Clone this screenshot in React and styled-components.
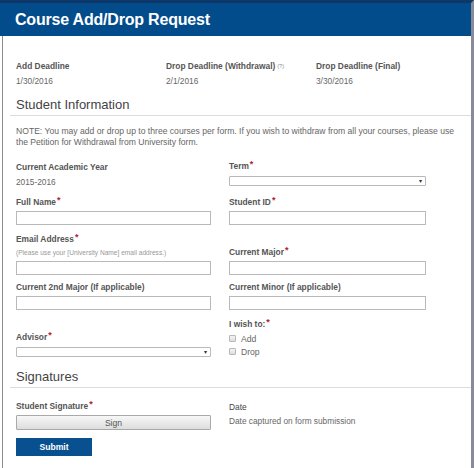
import React from "react";
import styled, { createGlobalStyle } from "styled-components";

const Global = createGlobalStyle`
  html, body { margin: 0; padding: 0; background: #ffffff; }
  body { font-family: "Liberation Sans", Arial, sans-serif; }
  * { box-sizing: border-box; }
`;

const Frame = styled.div`
  width: 474px;
  height: 468px;
  border-top: 3px solid #0c3768;
  border-right: 3px solid #8a8b98;
  display: flex;
  flex-direction: column;
  overflow: hidden;
`;

const Header = styled.header`
  height: 33px;
  flex: none;
  background: #034c8b;
  display: flex;
  align-items: center;
  padding-left: 15px;
`;

const Title = styled.h1`
  margin: 0;
  color: #ffffff;
  font-family: "Liberation Sans", Arial, sans-serif;
  font-weight: 700;
  font-size: 16px;
  letter-spacing: -0.2px;
`;

const Body = styled.main`
  flex: 1;
  margin-left: 2px;
  border-left: 1px solid #8c8c8c;
  padding: 24px 5px 0 13px;
  color: #555;
`;

const DeadlineRow = styled.div`
  display: grid;
  grid-template-columns: 150px 150px 150px;
`;

const Stack = styled.div`
  display: flex;
  flex-direction: column;
  gap: ${(p) => p.$gap ?? 3}px;
  align-self: ${(p) => (p.$top ? "start" : "auto")};
  margin-top: ${(p) => p.$top ?? 0}px;
`;

const Label = styled.div`
  font-size: 8.4px;
  line-height: 12px;
  font-weight: ${(p) => (p.$plain ? 400 : 700)};
  color: ${(p) => (p.$plain ? "#444" : "#555")};
  white-space: nowrap;
`;

const Value = styled.div`
  font-size: 8.3px;
  line-height: 12px;
  color: #666;
`;

const Help = styled.span`
  font-size: 5.5px;
  line-height: 0;
  font-weight: 400;
  color: #888;
  margin-left: 2px;
  vertical-align: 1px;
`;

const Req = styled.span`
  color: #b3202a;
  font-size: 9px;
  line-height: 0;
  margin-left: 1px;
  vertical-align: 2px;
`;

const SectionTitle = styled.h2`
  margin: ${(p) => p.$top}px -6px 0;
  padding-left: 6px;
  font-weight: 400;
  font-size: 13px;
  line-height: 18px;
  color: #444;
  border-bottom: 1px solid #dcdcdc;
  padding-bottom: 1px;
`;

const Note = styled.p`
  margin: 10px 0 0;
  font-size: 8.6px;
  line-height: 11px;
  color: #666;
  width: 448px;
`;

const FormGrid = styled.div`
  display: grid;
  grid-template-columns: 195px 197px;
  column-gap: 18px;
  margin-top: ${(p) => p.$top}px;
  align-items: end;
`;

const Field = styled.div`
  display: flex;
  flex-direction: column;
`;

const Hint = styled.div`
  font-size: 6.6px;
  line-height: 8px;
  color: #999;
  margin-top: 4px;
  white-space: nowrap;
`;

const TextInput = styled.div`
  height: 14px;
  margin-top: ${(p) => p.$top ?? 3}px;
  border: 1px solid #b9b9b9;
  background: #fff;
`;

const Select = styled.div`
  height: 10px;
  margin-top: ${(p) => p.$top ?? 4}px;
  border: 1px solid #b9b9b9;
  border-radius: 1px;
  background: #fff;
  display: flex;
  align-items: center;
  justify-content: flex-end;
  padding-right: 3px;
  font-size: 6px;
  line-height: 8px;
  color: #333;
`;

const Checks = styled.div`
  display: flex;
  flex-direction: column;
  margin-top: 2px;
`;

const CheckRow = styled.label`
  display: flex;
  align-items: center;
  gap: 5px;
  height: 13px;
  font-size: 8.6px;
  color: #666;
`;

const Box = styled.span`
  width: 7px;
  height: 7px;
  border: 1px solid #b8b8b8;
  background: linear-gradient(#f4f4f4, #dedede);
  border-radius: 1px;
`;

const SignButton = styled.button`
  height: 15px;
  margin-top: 3px;
  border: 1px solid #a9a9a9;
  border-radius: 1px;
  background: linear-gradient(#f7f7f7, #dddddd);
  color: #555;
  font-family: "Liberation Sans", Arial, sans-serif;
  font-size: 8.6px;
  padding: 0;
`;

const Submit = styled.button`
  margin-top: 8px;
  width: 76px;
  height: 18px;
  border: none;
  background: #08508f;
  color: #fff;
  font-family: "Liberation Sans", Arial, sans-serif;
  font-weight: 700;
  font-size: 8.6px;
  padding: 0;
  display: block;
`;

const Spacer = styled.div`
  height: ${(p) => p.$h}px;
`;

export default function App() {
  return (
    <>
      <Global />
      <Frame>
        <Header>
          <Title>Course Add/Drop Request</Title>
        </Header>
        <Body>
          <DeadlineRow>
            <Stack>
              <Label>Add Deadline</Label>
              <Value>1/30/2016</Value>
            </Stack>
            <Stack>
              <Label>
                Drop Deadline (Withdrawal)<Help>(?)</Help>
              </Label>
              <Value>2/1/2016</Value>
            </Stack>
            <Stack>
              <Label>Drop Deadline (Final)</Label>
              <Value>3/30/2016</Value>
            </Stack>
          </DeadlineRow>

          <SectionTitle $top={9}>Student Information</SectionTitle>
          <Note>
            NOTE: You may add or drop up to three courses per form. If you wish to withdraw
            from all your courses, please use the Petition for Withdrawal from University form.
          </Note>

          <FormGrid $top={12}>
            <Stack>
              <Label>Current Academic Year</Label>
              <Value>2015-2016</Value>
            </Stack>
            <Field>
              <Label>
                Term<Req>*</Req>
              </Label>
              <Select $top={4}>▾</Select>
              <Spacer $h={2} />
            </Field>
          </FormGrid>

          <FormGrid $top={8}>
            <Field>
              <Label>
                Full Name<Req>*</Req>
              </Label>
              <TextInput />
            </Field>
            <Field>
              <Label>
                Student ID<Req>*</Req>
              </Label>
              <TextInput />
            </Field>
          </FormGrid>

          <FormGrid $top={8}>
            <Field>
              <Label>
                Email Address<Req>*</Req>
              </Label>
              <Hint>(Please use your [University Name] email address.)</Hint>
              <TextInput $top={4} />
            </Field>
            <Field>
              <Label>
                Current Major<Req>*</Req>
              </Label>
              <TextInput />
            </Field>
          </FormGrid>

          <FormGrid $top={6}>
            <Field>
              <Label>Current 2nd Major (If applicable)</Label>
              <TextInput />
            </Field>
            <Field>
              <Label>Current Minor (If applicable)</Label>
              <TextInput />
            </Field>
          </FormGrid>

          <FormGrid $top={8}>
            <Field>
              <Label>
                Advisor<Req>*</Req>
              </Label>
              <Select $top={4}>▾</Select>
              <Spacer $h={1} />
            </Field>
            <Field>
              <Label>
                I wish to:<Req>*</Req>
              </Label>
              <Checks>
                <CheckRow>
                  <Box />
                  Add
                </CheckRow>
                <CheckRow>
                  <Box />
                  Drop
                </CheckRow>
              </Checks>
            </Field>
          </FormGrid>

          <SectionTitle $top={10}>Signatures</SectionTitle>

          <FormGrid $top={12}>
            <Field>
              <Label>
                Student Signature<Req>*</Req>
              </Label>
              <SignButton type="button">Sign</SignButton>
            </Field>
            <Stack $gap={2} $top={1}>
              <Label $plain>Date</Label>
              <Value>Date captured on form submission</Value>
            </Stack>
          </FormGrid>

          <Submit type="button">Submit</Submit>
        </Body>
      </Frame>
    </>
  );
}
